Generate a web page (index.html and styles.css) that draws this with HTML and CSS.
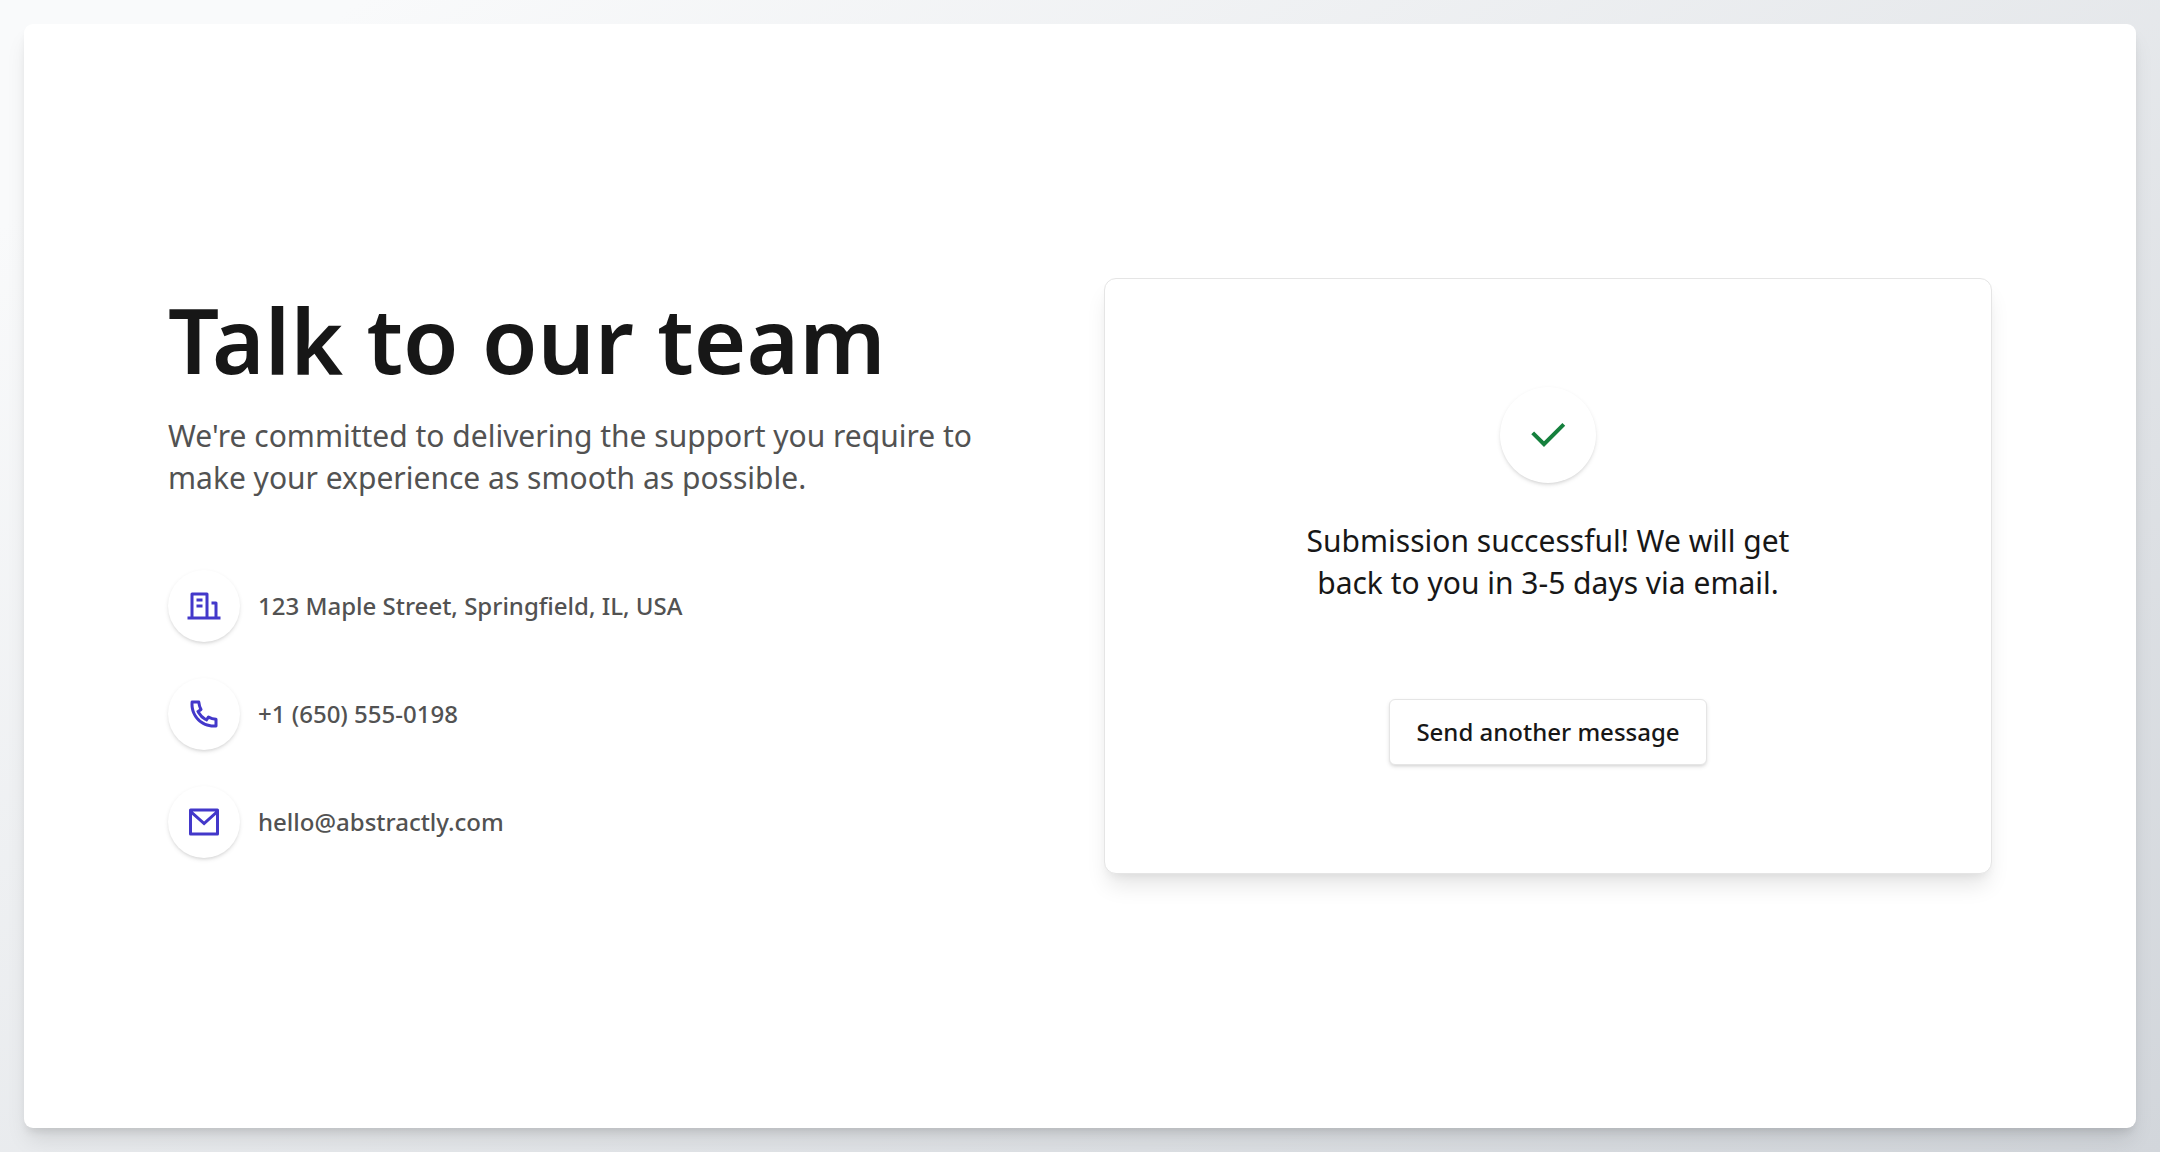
FILE: index.html
```html
<!DOCTYPE html>
<html lang="en">
<head>
<meta charset="utf-8">
<meta name="viewport" content="width=device-width, initial-scale=1">
<title>Talk to our team</title>
<link rel="stylesheet" href="styles.css">
</head>
<body>
<main class="panel">
  <div class="columns">
    <section class="intro">
      <h1 class="title">Talk to our team</h1>
      <p class="lead">We're committed to delivering the support you require to make your experience as smooth as possible.</p>
      <ul class="contacts">
        <li class="contact">
          <span class="badge">
            <svg class="icon" viewBox="0 0 24 24" aria-hidden="true"><path d="M21 19h2v2H1v-2h2V4a1 1 0 0 1 1-1h10a1 1 0 0 1 1 1v15h4v-8h-2V9h3a1 1 0 0 1 1 1v9zM5 5v14h8V5H5zm2 6h4v2H7v-2zm0-4h4v2H7V7z"/></svg>
          </span>
          <span>123 Maple Street, Springfield, IL, USA</span>
        </li>
        <li class="contact">
          <span class="badge">
            <svg class="icon" viewBox="0 0 24 24" aria-hidden="true"><path d="M9.366 10.682a10.556 10.556 0 0 0 3.952 3.952l.884-1.238a1 1 0 0 1 1.294-.296 11.422 11.422 0 0 0 4.583 1.364 1 1 0 0 1 .921.997v4.462a1 1 0 0 1-.898.995c-.53.055-1.064.082-1.602.082C9.94 21 3 14.06 3 5.5c0-.538.027-1.072.082-1.602A1 1 0 0 1 4.077 3h4.462a1 1 0 0 1 .997.921A11.422 11.422 0 0 0 10.9 8.504a1 1 0 0 1-.296 1.294l-1.238.884zm-2.522-.657l1.9-1.357A13.41 13.41 0 0 1 7.647 5H5.01c-.006.166-.009.333-.009.5C5 12.956 11.044 19 18.5 19c.167 0 .334-.003.5-.01v-2.637a13.41 13.41 0 0 1-3.668-1.097l-1.357 1.9a12.442 12.442 0 0 1-1.588-.75l-.058-.033a12.556 12.556 0 0 1-4.702-4.702l-.033-.058a12.442 12.442 0 0 1-.75-1.588z"/></svg>
          </span>
          <span>+1 (650) 555-0198</span>
        </li>
        <li class="contact">
          <span class="badge">
            <svg class="icon" viewBox="0 0 24 24" aria-hidden="true"><path d="M3 3h18a1 1 0 0 1 1 1v16a1 1 0 0 1-1 1H3a1 1 0 0 1-1-1V4a1 1 0 0 1 1-1zm17 4.238l-7.928 7.1L4 7.216V19h16V7.238zM4.511 5l7.55 6.662L19.502 5H4.511z"/></svg>
          </span>
          <span>hello@abstractly.com</span>
        </li>
      </ul>
    </section>
    <section class="result">
      <span class="badge badge-success">
        <svg class="icon" viewBox="0 0 24 24" aria-hidden="true"><path d="M10 15.172l9.192-9.193 1.415 1.414L10 18l-6.364-6.364 1.414-1.414z"/></svg>
      </span>
      <p class="message" role="status">Submission successful! We will get back to you in 3-5 days via email.</p>
      <button class="button" type="button">Send another message</button>
    </section>
  </div>
</main>
</body>
</html>
```
FILE: styles.css
```css
*,
*::before,
*::after {
  box-sizing: border-box;
}

body {
  margin: 0;
  min-height: 100vh;
  padding: 24px;
  display: flex;
  font-family: "Noto Sans", sans-serif;
  color: #171717;
  background: linear-gradient(148deg, #f9fafb 9%, #d2d6db 100%);
}

.panel {
  flex: 1;
  display: flex;
  align-items: center;
  padding: 144px;
  background: #fff;
  border-radius: 9px;
  box-shadow: 0 15px 22px -4px rgb(0 0 0 / 10%), 0 6px 9px -3px rgb(0 0 0 / 10%);
}

.columns {
  flex: 1;
  display: grid;
  grid-template-columns: repeat(2, minmax(0, 1fr));
  gap: 48px;
  align-items: center;
}

.title {
  margin: 0 0 31px;
  font-size: 90px;
  line-height: 90px;
  font-weight: 600;
}

.lead {
  margin: 0 0 71px;
  font-size: 30px;
  line-height: 42px;
  color: #525252;
}

.contacts {
  list-style: none;
  margin: 0;
  padding: 0;
  display: grid;
  gap: 36px;
}

.contact {
  display: flex;
  align-items: center;
  gap: 18px;
  font-size: 24px;
  line-height: 36px;
  font-weight: 500;
  color: #525252;
}

.badge {
  flex: none;
  width: 72px;
  height: 72px;
  display: grid;
  place-items: center;
  border-radius: 50%;
  background: #fff;
  color: #4338ca;
  box-shadow: 0 2px 4px rgb(0 0 0 / 10%), 0 2px 3px -1px rgb(0 0 0 / 8%);
}

.icon {
  width: 50%;
  height: 50%;
  fill: currentColor;
}

.badge-success {
  width: 96px;
  height: 96px;
  color: #15803d;
}

.result {
  display: flex;
  flex-direction: column;
  align-items: center;
  padding: 108px 36px;
  border: 1px solid #e5e5e5;
  border-radius: 12px;
  background: #fff;
  box-shadow: 0 15px 22px -4px rgb(0 0 0 / 10%), 0 6px 9px -3px rgb(0 0 0 / 5%);
}

.message {
  max-width: 520px;
  margin: 37px 0 95px;
  font-size: 30px;
  line-height: 42px;
  text-align: center;
}

.button {
  padding: 14px 26px;
  border: 1px solid #e5e5e5;
  border-radius: 6px;
  background: #fff;
  color: #171717;
  font-family: inherit;
  font-size: 24px;
  line-height: 36px;
  font-weight: 500;
  box-shadow: 0 2px 4px rgb(0 0 0 / 10%), 0 2px 3px -1px rgb(0 0 0 / 8%);
}
```
